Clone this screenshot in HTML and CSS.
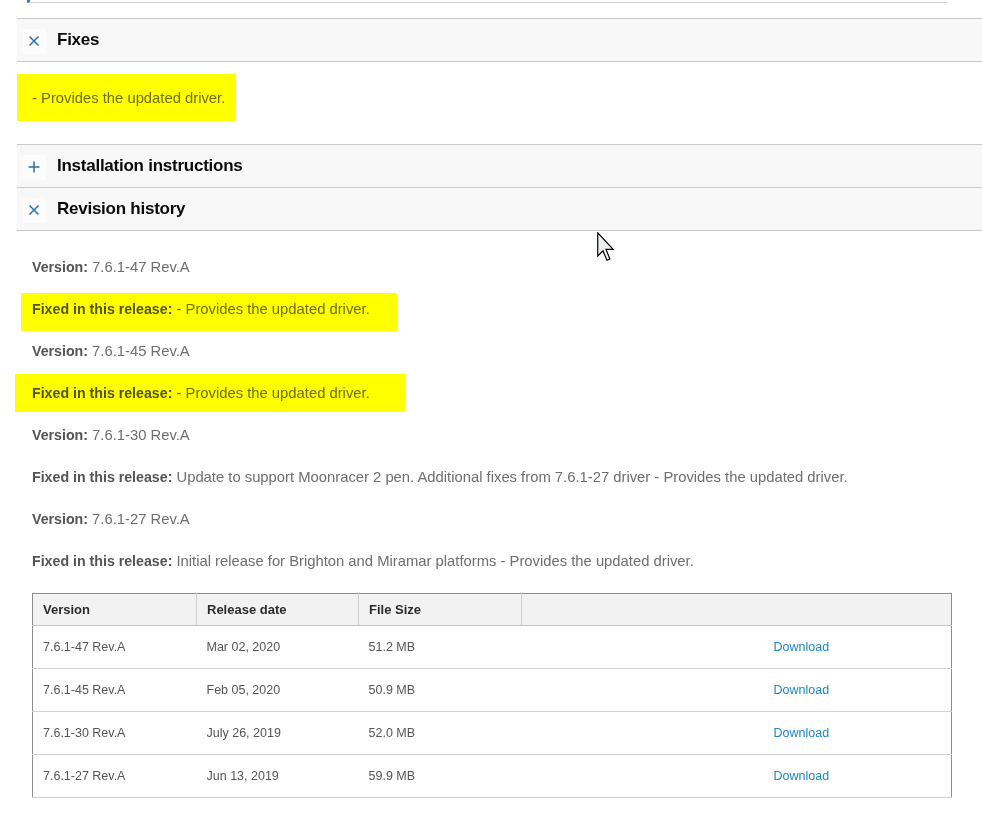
FILE: index.html
```html
<!doctype html>
<html>
  <head>
    <title>Driver details</title>
    <link rel="stylesheet" href="styles.css">
  </head>
  <body>
    <div class="prevBox"></div>

    <div class="accordion">
      <div class="accHead">
        <span class="accIcon">
          <svg width="12" height="12" viewBox="0 0 12 12"><path d="M1.5 1.5 L10.5 10.5 M10.5 1.5 L1.5 10.5" /></svg>
        </span>
        <h2>Fixes</h2>
      </div>
      <div class="accBody fixesBody">
        <p class="rev"><span class="marker markFixes"></span>- Provides the updated driver.</p>
      </div>

      <div class="accHead">
        <span class="accIcon">
          <svg width="12" height="12" viewBox="0 0 12 12"><path d="M6 0.5 L6 11.5 M0.5 6 L11.5 6" /></svg>
        </span>
        <h2>Installation instructions</h2>
      </div>

      <div class="accHead">
        <span class="accIcon">
          <svg width="12" height="12" viewBox="0 0 12 12"><path d="M1.5 1.5 L10.5 10.5 M10.5 1.5 L1.5 10.5" /></svg>
        </span>
        <h2>Revision history</h2>
      </div>
      <div class="accBody revBody">
        <p class="rev"><b>Version:</b> 7.6.1-47 Rev.A</p>
        <p class="rev"><span class="marker markOne"></span><b>Fixed in this release:</b> - Provides the updated driver.</p>
        <p class="rev"><b>Version:</b> 7.6.1-45 Rev.A</p>
        <p class="rev"><span class="marker markTwo"></span><b>Fixed in this release:</b> - Provides the updated driver.</p>
        <p class="rev"><b>Version:</b> 7.6.1-30 Rev.A</p>
        <p class="rev"><b>Fixed in this release:</b> Update to support Moonracer 2 pen. Additional fixes from 7.6.1-27 driver - Provides the updated driver.</p>
        <p class="rev"><b>Version:</b> 7.6.1-27 Rev.A</p>
        <p class="rev"><b>Fixed in this release:</b> Initial release for Brighton and Miramar platforms - Provides the updated driver.</p>

        <table class="revTable">
          <tr class="headRow">
            <th class="colVer">Version</th>
            <th class="colDate">Release date</th>
            <th class="colSize">File Size</th>
            <th class="colLink"></th>
          </tr>
          <tr>
            <td>7.6.1-47 Rev.A</td>
            <td>Mar 02, 2020</td>
            <td>51.2 MB</td>
            <td class="linkCell"><a href="#">Download</a></td>
          </tr>
          <tr>
            <td>7.6.1-45 Rev.A</td>
            <td>Feb 05, 2020</td>
            <td>50.9 MB</td>
            <td class="linkCell"><a href="#">Download</a></td>
          </tr>
          <tr>
            <td>7.6.1-30 Rev.A</td>
            <td>July 26, 2019</td>
            <td>52.0 MB</td>
            <td class="linkCell"><a href="#">Download</a></td>
          </tr>
          <tr>
            <td>7.6.1-27 Rev.A</td>
            <td>Jun 13, 2019</td>
            <td>59.9 MB</td>
            <td class="linkCell"><a href="#">Download</a></td>
          </tr>
        </table>
      </div>
    </div>

    <svg class="cursor" width="18" height="30" viewBox="0 0 12 20">
      <path d="M0.5 0.5 L0.5 16 L4 12.6 L6.6 18.8 L8.6 18 L6 11.6 L10.8 11.6 Z" />
    </svg>
  </body>
</html>
```

FILE: styles.css
```css
body {
  margin: 0;
  font-family: "Liberation Sans", Arial, sans-serif;
  color: #6e6e6e;
  background: #fff;
}

.prevBox {
  width: 917px;
  height: 2px;
  margin-left: 27px;
  border-left: 3px solid #1a88c9;
  border-bottom: 1px solid #d4d4d4;
}

.accordion {
  margin: 15px 0 0 17px;
}

.accHead {
  display: flex;
  align-items: center;
  height: 42px;
  padding-left: 5px;
  background: #f8f8f8;
  border-top: 1px solid #c9c9c9;
}

.accIcon {
  display: flex;
  align-items: center;
  justify-content: center;
  width: 24px;
  height: 25px;
  margin-top: 2px;
  margin-right: 11px;
  background: #fcfcfc;
}

.accIcon svg path {
  stroke: #2a6fa8;
  stroke-width: 1.5;
  fill: none;
}

.accHead h2 {
  margin: 0;
  font-size: 17px;
  letter-spacing: -0.25px;
  color: #0a0a0a;
}

.accBody {
  border-top: 1px solid #c9c9c9;
  padding-left: 15px;
}

.fixesBody {
  padding-top: 26px;
  padding-bottom: 36px;
}

.revBody {
  padding-top: 26px;
}

.rev {
  position: relative;
  margin: 0 0 22px;
  font-size: 14.8px;
  line-height: 20px;
  white-space: nowrap;
}

.fixesBody .rev {
  margin: 0;
}

.rev b {
  font-size: 14.2px;
  color: #545454;
}

/* yellow highlighter marks drawn over the page */
.marker {
  position: absolute;
  background: #ffff00;
  mix-blend-mode: multiply;
}

.markFixes {
  left: -15px;
  top: -14px;
  width: 219px;
  height: 47px;
}

.markOne {
  left: -11px;
  top: -6px;
  width: 376px;
  height: 38px;
}

.markTwo {
  left: -17px;
  top: -9px;
  width: 390px;
  height: 38px;
}

.revTable {
  width: 920px;
  border-collapse: collapse;
  border: 1px solid #8c8c8c;
  font-size: 12.5px;
  color: #555;
}

.revTable th {
  height: 31px;
  padding: 0 10px;
  text-align: left;
  font-size: 13px;
  color: #2b2b2b;
  background: #f2f2f2;
  border-bottom: 1px solid #c4c4c4;
  border-right: 1px solid #d0d0d0;
}

.revTable th.colLink {
  border-right: none;
}

.colVer {
  width: 143px;
}

.colDate {
  width: 141px;
}

.colSize {
  width: 142px;
}

.revTable td {
  height: 42px;
  padding: 0 10px;
  border-bottom: 1px solid #cfcfcf;
}

.revTable .linkCell {
  padding-left: 252px;
}

.linkCell a {
  color: #1a88c9;
  text-decoration: none;
}

.cursor {
  position: absolute;
  left: 597px;
  top: 232px;
}

.cursor path {
  fill: #eef1f1;
  stroke: #000;
  stroke-width: 0.8;
  stroke-linejoin: miter;
}
```
